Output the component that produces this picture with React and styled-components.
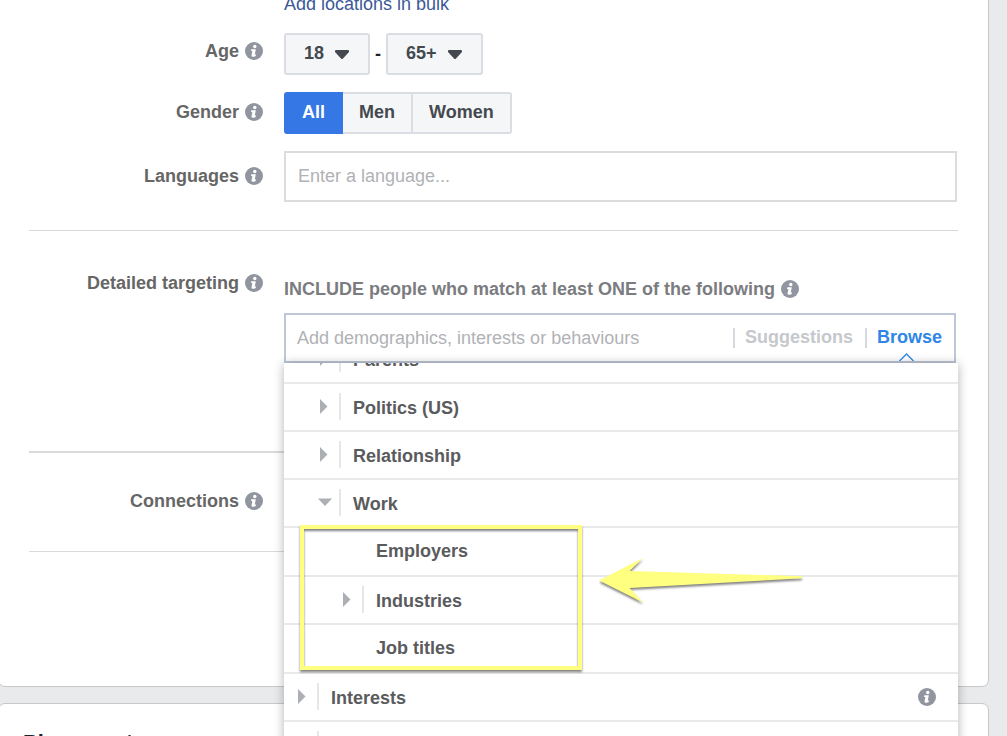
import React, { useState } from 'react';
import styled, { createGlobalStyle, css } from 'styled-components';

const GlobalStyle = createGlobalStyle`
  *, *::before, *::after { box-sizing: border-box; }
  body {
    margin: 0;
    background: #e9eaec;
    color: #5a5b5d;
    font-family: "Liberation Sans", Arial, Helvetica, sans-serif;
    font-size: 18px;
    line-height: 20px;
  }
  button, input, select { font: inherit; color: inherit; margin: 0; }
`;

const Page = styled.main`
  height: 100vh;
  overflow: hidden;
  padding-right: 18px;
`;

const Card = styled.section`
  position: relative;
  z-index: ${(p) => (p.$raised ? 1 : 0)};
  margin: 0 0 16px -2px;
  padding: 0 30px;
  background: #fff;
  border: 1px solid #c6c8ca;
  border-radius: 7px;
`;

const AudienceCard = styled(Card)`
  margin-top: -7px;
  padding-bottom: 134px;
`;

const PlacementsCard = styled(Card)`
  padding: 26px 24px 60px;
`;

const CardTitle = styled.h2`
  margin: 0;
  color: #1d2129;
  font-size: 22px;
  line-height: 26px;
`;

const FormRow = styled.div`
  display: grid;
  grid-template-columns: 234px minmax(0, 1fr);
  column-gap: 21px;
  align-items: ${(p) => (p.$top ? 'start' : 'center')};
  margin-top: ${(p) => p.$gap || 0}px;
`;

const LabelCell = styled.div`
  display: flex;
  justify-content: flex-end;
  align-items: center;
  gap: 6px;
  padding-bottom: ${(p) => p.$lift || 0}px;
`;

const Label = styled.label`
  color: #666;
  font-weight: bold;
`;

const Control = styled.div`
  grid-column: 2;
  display: flex;
  align-items: center;
  gap: ${(p) => p.$gap || 0}px;
`;

const BulkLink = styled.a`
  color: #3b5998;
  text-decoration: none;
`;

const Divider = styled.hr`
  height: ${(p) => p.$size || 1}px;
  margin: 0;
  margin-top: ${(p) => p.$gap || 0}px;
  border: 0;
  background: #d9dadb;
`;

const SelectBox = styled.span`
  position: relative;
  display: inline-flex;
  svg {
    position: absolute;
    right: 21px;
    top: 17px;
    pointer-events: none;
  }
`;

const Select = styled.select`
  appearance: none;
  height: 42px;
  width: ${(p) => (p.$wide ? 97 : 86)}px;
  padding: 0 36px 2px 18px;
  background: #f5f6f7;
  border: 2px solid #dadde1;
  border-radius: 3px;
  color: #444950;
  font-weight: bold;
`;

const Dash = styled.span`
  color: #1d2129;
  font-weight: bold;
`;

const Segments = styled.div`
  display: inline-flex;
`;

const Segment = styled.button`
  height: 42px;
  padding: 0 16px 2px;
  background: #f5f6f7;
  border: 2px solid #dadde1;
  border-left-width: 0;
  color: #444950;
  font-weight: bold;
  &:first-child { border-left-width: 2px; border-radius: 3px 0 0 3px; }
  &:last-child { border-radius: 0 3px 3px 0; }
  ${(p) => p.$active && css`
    background: #3578e5;
    border-color: #3578e5;
    color: #fff;
  `}
`;

const LanguageInput = styled.input`
  width: 100%;
  height: 51px;
  margin-right: 1px;
  padding: 0 12px;
  background: #fff;
  border: 2px solid #dcdcdd;
  outline: 0;
  &::placeholder { color: #b0b2b5; opacity: 1; }
`;

const Hint = styled.div`
  display: flex;
  align-items: center;
  gap: 6px;
  padding-top: 6px;
  color: #7b7c7f;
  font-weight: bold;
`;

const TargetField = styled.div`
  position: relative;
  margin-top: 14px;
`;

const SearchBox = styled.div`
  display: flex;
  align-items: center;
  height: 50px;
  margin-right: 2px;
  padding: 0 12px 0 11px;
  background: #fff;
  border: 2px solid #bdc7d8;
`;

const SearchInput = styled.input`
  flex: 1;
  min-width: 0;
  padding: 0;
  background: none;
  border: 0;
  outline: 0;
  &::placeholder { color: #b0b2b5; opacity: 1; }
`;

const Tab = styled.button`
  position: relative;
  padding: 0 0 2px;
  margin-left: 10px;
  background: none;
  border: 0;
  border-radius: 0;
  color: ${(p) => (p.$active ? '#2f86e8' : '#c5c8cc')};
  font-weight: bold;
  svg {
    position: absolute;
    left: 22px;
    top: 26px;
  }
`;

const Rule = styled.span`
  flex: none;
  width: 2px;
  height: 20px;
  background: #d5d8dc;
`;

const TabRule = styled(Rule)`
  margin-left: ${(p) => p.$gap || 0}px;
`;

const TreeRule = styled(Rule)`
  height: 27px;
  margin-bottom: 1px;
  background: #e5e6e8;
`;

const Menu = styled.div`
  position: absolute;
  top: 100%;
  left: 0;
  right: 0;
  height: 420px;
  box-shadow: 0 1px 10px rgba(0, 0, 0, 0.3);
`;

const MenuScroll = styled.div`
  height: 100%;
  overflow: hidden;
  background: #fff;
`;

const Tree = styled.ul`
  list-style: none;
  margin: 0;
  margin-top: -27px;
  padding: 0;
`;

const TreeItem = styled.li`
  display: flex;
  align-items: center;
  height: ${(p) => (p.$leaf ? 49 : 48)}px;
  padding-left: ${(p) => [12, 34, 57][p.$level]}px;
  padding-right: 22px;
  border-bottom: 2px solid #e9e9ea;
  color: #5a5b5d;
  font-weight: bold;
`;

const Toggle = styled.button`
  display: flex;
  width: 14px;
  padding: 0 0 2px;
  margin-right: 7px;
  background: none;
  border: 0;
`;

const ItemText = styled.span`
  flex: 1;
  margin-left: ${(p) => (p.$leaf ? 35 : 12)}px;
  padding: ${(p) => (p.$leaf ? '0 0 2px' : '2px 0 0')};
`;

const Highlight = styled.div`
  position: absolute;
  left: 16px;
  top: 162px;
  width: 282px;
  height: 145px;
  border: 4px solid #ffff80;
  filter: drop-shadow(0 2px 1px rgba(0, 0, 0, 0.5));
  pointer-events: none;
`;

const Arrow = styled.svg`
  position: absolute;
  left: 314px;
  top: 193px;
  filter: drop-shadow(0 2px 1px rgba(0, 0, 0, 0.5));
  pointer-events: none;
`;

const InfoIcon = () => (
  <svg width="18" height="18" viewBox="0 0 18 18" aria-hidden="true">
    <circle cx="9" cy="9" r="9" fill="#9095a0" />
    <circle cx="9.800" cy="4.500" r="1.700" fill="#fff" />
    <path d="M6.300 7.300h4.500l-1 5.300h1.200l-.3 1.500c-1.200 1-4.700 1.200-4.100-1.200l.8-4H6z" fill="#fff" />
  </svg>
);

const Caret = () => (
  <svg width="14" height="9" viewBox="0 0 14 9" aria-hidden="true">
    <path d="M1 0h12q1 0 1 1v1L8 8.500q-1 1-2 0L0 2V1q0-1 1-1z" fill="#444950" />
  </svg>
);

const Branch = ({ open, name }) => (
  <Toggle type="button" aria-label={name} aria-expanded={!!open}>
    <svg width="14" height="15" viewBox="0 0 14 15" aria-hidden="true">
      <path d={open ? 'M0 3.500h14L7 11z' : 'M2 0v15l7.500-7.500z'} fill="#acafb3" />
    </svg>
  </Toggle>
);

const ITEMS = [
  { name: 'Parents', level: 1 },
  { name: 'Politics (US)', level: 1 },
  { name: 'Relationship', level: 1 },
  { name: 'Work', level: 1, open: true },
  { name: 'Employers', level: 2, leaf: true },
  { name: 'Industries', level: 2 },
  { name: 'Job titles', level: 2, leaf: true },
  { name: 'Interests', level: 0, info: true },
  { name: 'Behaviours', level: 0 },
];

const FieldLabel = ({ text, htmlFor, lift }) => (
  <LabelCell $lift={lift}>
    <Label htmlFor={htmlFor}>{text}</Label>
    <InfoIcon />
  </LabelCell>
);

export default function App() {
  const [gender, setGender] = useState('All');
  return (
    <>
      <GlobalStyle />
      <Page>
        <AudienceCard $raised>
          <FormRow>
            <Control><BulkLink href="#bulk">Add locations in bulk</BulkLink></Control>
          </FormRow>
          <FormRow $gap={19}>
            <FieldLabel text="Age" htmlFor="age-min" lift={6} />
            <Control $gap={5}>
              <SelectBox>
                <Select id="age-min" defaultValue="18"><option>18</option><option>21</option></Select>
                <Caret />
              </SelectBox>
              <Dash>-</Dash>
              <SelectBox>
                <Select $wide aria-label="Maximum age" defaultValue="65+"><option>64</option><option>65+</option></Select>
                <Caret />
              </SelectBox>
            </Control>
          </FormRow>
          <FormRow $gap={17}>
            <FieldLabel text="Gender" htmlFor="gender-all" lift={2} />
            <Control>
              <Segments role="group" aria-label="Gender">
                {['All', 'Men', 'Women'].map((g) => (
                  <Segment
                    key={g}
                    id={`gender-${g.toLowerCase()}`}
                    type="button"
                    $active={gender === g}
                    aria-pressed={gender === g}
                    onClick={() => setGender(g)}
                  >
                    {g}
                  </Segment>
                ))}
              </Segments>
            </Control>
          </FormRow>
          <FormRow $gap={17}>
            <FieldLabel text="Languages" htmlFor="languages" lift={2} />
            <Control><LanguageInput id="languages" placeholder="Enter a language..." /></Control>
          </FormRow>
          <Divider $gap={28} />
          <FormRow $gap={42} $top>
            <FieldLabel text="Detailed targeting" htmlFor="targeting" />
            <div>
              <Hint>INCLUDE people who match at least ONE of the following <InfoIcon /></Hint>
              <TargetField>
                <SearchBox>
                  <SearchInput id="targeting" placeholder="Add demographics, interests or behaviours" />
                  <TabRule />
                  <Tab type="button">Suggestions</Tab>
                  <TabRule $gap={12} />
                  <Tab type="button" $active>
                    Browse
                    <svg width="15" height="8" viewBox="0 0 15 8" aria-hidden="true">
                      <path d="M.5 8 7.500 1l7 7" fill="#fff" stroke="#2f86e8" strokeWidth="1.300" />
                    </svg>
                  </Tab>
                </SearchBox>
                <Menu>
                  <MenuScroll>
                    <Tree>
                      {ITEMS.map((item) => (
                        <TreeItem key={item.name} $level={item.level} $leaf={item.leaf}>
                          {!item.leaf && <Branch open={item.open} name={item.name} />}
                          {!item.leaf && <TreeRule />}
                          <ItemText $leaf={item.leaf}>{item.name}</ItemText>
                          {item.info && <InfoIcon />}
                        </TreeItem>
                      ))}
                    </Tree>
                  </MenuScroll>
                  <Highlight />
                  <Arrow width="206" height="50" viewBox="0 0 206 50" aria-hidden="true">
                    <path
                      d="M3 23.500 45 2 31.500 15 204 20.200v2L31.500 32 45 46.500 3 25.500q-2-1 0-2z"
                      fill="#ffff80"
                    />
                  </Arrow>
                </Menu>
              </TargetField>
            </div>
          </FormRow>
          <Divider $gap={88} $size={2} />
          <FormRow $gap={38}>
            <FieldLabel text="Connections" />
          </FormRow>
          <Divider $gap={40} />
        </AudienceCard>
        <PlacementsCard>
          <CardTitle>Placements</CardTitle>
        </PlacementsCard>
      </Page>
    </>
  );
}
